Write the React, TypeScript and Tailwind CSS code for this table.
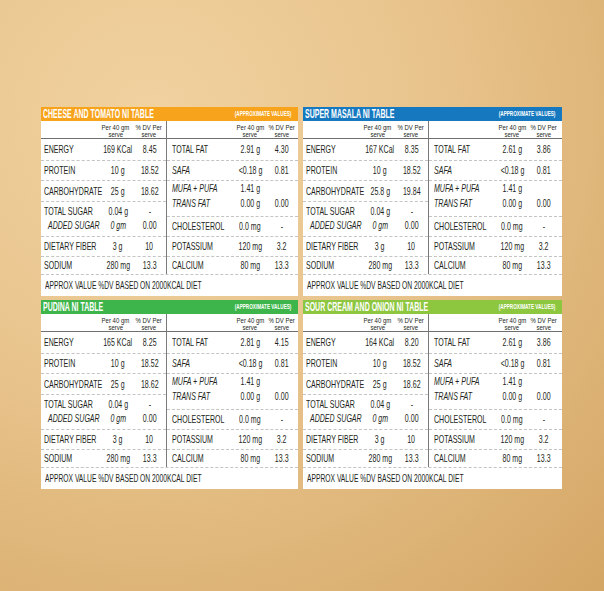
const panels = [
  { title: "CHEESE AND TOMATO NI TABLE", bg: "bg-[#f8a31c]", energy: ["169 KCal", "8.45"], carbo: ["25 g", "18.62"], fat: ["2.91 g", "4.30"] },
  { title: "SUPER MASALA NI TABLE", bg: "bg-[#1679bf]", energy: ["167 KCal", "8.35"], carbo: ["25.8 g", "19.84"], fat: ["2.61 g", "3.86"] },
  { title: "PUDINA NI TABLE", bg: "bg-[#3db54a]", energy: ["165 KCal", "8.25"], carbo: ["25 g", "18.62"], fat: ["2.81 g", "4.15"] },
  { title: "SOUR CREAM AND ONION NI TABLE", bg: "bg-[#8dc63f]", energy: ["164 KCal", "8.20"], carbo: ["25 g", "18.62"], fat: ["2.61 g", "3.86"] },
]

// the print uses a condensed face; squeeze Liberation Sans to match
const Sq = ({ children, o = "origin-left", i }: { children: React.ReactNode; o?: string; i?: boolean }) => (
  <span className={`inline-block scale-x-[0.64] ${o} ${i ? "italic" : ""}`}>{children}</span>
)

const Lbl = ({ left, children, i, indent }: { left: boolean; children: React.ReactNode; i?: boolean; indent?: boolean }) => (
  <div className={left ? (indent ? "w-[62px] pl-[7px]" : "w-[62px] pl-[3px]") : "w-[66px] pl-[5px]"}>
    <Sq i={i}>{children}</Sq>
  </div>
)

const Num = ({ w, children, i }: { w: string; children: React.ReactNode; i?: boolean }) => (
  <div className={`flex justify-center ${w}`}>
    <Sq o="origin-center" i={i}>{children}</Sq>
  </div>
)

const Cells = ({ left, label, value, dv, italic }: { left: boolean; label: string; value: string; dv: string; italic?: boolean }) => (
  <>
    <Lbl left={left} i={italic}>{label}</Lbl>
    <Num w={left ? "w-[30px]" : "w-[34px]"}>{value}</Num>
    <Num w={left ? "flex-1" : "w-[30px]"}>{dv}</Num>
  </>
)

const Head = ({ w, a, b }: { w: string; a: string; b: string }) => (
  <div className={`flex flex-col items-center ${w}`}>
    <span className="inline-block scale-x-[0.75]">{a}</span>
    <span className="inline-block scale-x-[0.75]">{b}</span>
  </div>
)

const SubHead = ({ left }: { left: boolean }) => (
  <div className="flex h-[18px] items-end border-b border-[#6f6f6f] text-[8px] leading-[7px]">
    <div className={left ? "w-[62px]" : "w-[66px]"}></div>
    <Head w={left ? "w-[30px]" : "w-[34px]"} a="Per 40 gm" b="serve" />
    <Head w={left ? "flex-1" : "w-[30px]"} a="% DV Per" b="serve" />
  </div>
)

const Row = ({ h, left, label, value, dv, last, italic }: { h: string; left: boolean; label: string; value: string; dv: string; last?: boolean; italic?: boolean }) => (
  <div className={`flex items-center ${h} ${last ? "" : "border-b border-dashed border-[#c4c4c4]"}`}>
    <Cells left={left} label={label} value={value} dv={dv} italic={italic} />
  </div>
)

const Panel = ({ p }: { p: (typeof panels)[number] }) => (
  <div className="flex flex-col bg-white">
    <div className={`flex h-[14px] items-center pl-[2px] pr-[7px] text-white ${p.bg}`}>
      <div className="min-w-0 flex-1">
        <span className="inline-block origin-left scale-x-[0.56] text-[12.5px] font-bold leading-none">{p.title}</span>
      </div>
      <div className="flex w-[60px] justify-end">
        <span className="inline-block shrink-0 origin-right scale-x-[0.62] text-[7.5px] font-bold leading-none">(APPROXIMATE VALUES)</span>
      </div>
    </div>
    <div className="flex h-[153px]">
      <div className="flex w-[126px] flex-col border-r border-[#7a7a7a]">
        <SubHead left />
        <Row h="h-[22px]" left label="ENERGY" value={p.energy[0]} dv={p.energy[1]} />
        <Row h="h-[20px]" left label="PROTEIN" value="10 g" dv="18.52" />
        <Row h="h-[21px]" left label="CARBOHYDRATE" value={p.carbo[0]} dv={p.carbo[1]} />
        <div className="flex h-[35px] flex-col border-b border-dashed border-[#c4c4c4] pt-[2px]">
          <div className="flex h-[14px] items-center">
            <Cells left label="TOTAL SUGAR" value="0.04 g" dv="-" />
          </div>
          <div className="flex h-[14px] items-center">
            <Lbl left indent i>ADDED SUGAR</Lbl>
            <Num w="w-[30px]" i>0 gm</Num>
            <Num w="flex-1">0.00</Num>
          </div>
        </div>
        <Row h="h-[20px]" left label="DIETARY FIBER" value="3 g" dv="10" />
        <Row h="h-[17px]" left label="SODIUM" value="280 mg" dv="13.3" last />
      </div>
      <div className="flex flex-1 flex-col">
        <SubHead left={false} />
        <Row h="h-[22px]" left={false} label="TOTAL FAT" value={p.fat[0]} dv={p.fat[1]} />
        <Row h="h-[20px]" left={false} label="SAFA" value="<0.18 g" dv="0.81" italic />
        <div className="flex h-[36px] flex-col border-b border-dashed border-[#c4c4c4]">
          <div className="flex h-[14px] items-center">
            <Cells left={false} label="MUFA + PUFA" value="1.41 g" dv="" italic />
          </div>
          <div className="flex h-[16px] items-center">
            <Cells left={false} label="TRANS FAT" value="0.00 g" dv="0.00" italic />
          </div>
        </div>
        <Row h="h-[20px]" left={false} label="CHOLESTEROL" value="0.0 mg" dv="-" />
        <Row h="h-[20px]" left={false} label="POTASSIUM" value="120 mg" dv="3.2" />
        <Row h="h-[17px]" left={false} label="CALCIUM" value="80 mg" dv="13.3" last />
      </div>
    </div>
    <div className="flex h-[22px] items-center border-t border-dashed border-[#c4c4c4] pl-[4px] text-[10.5px]">
      <Sq>APPROX VALUE %DV BASED ON 2000KCAL DIET</Sq>
    </div>
  </div>
)

export default function App() {
  return (
    <div className="h-[591px] w-[604px] overflow-hidden whitespace-nowrap bg-[radial-gradient(circle_at_25%_20%,#f0d2a0_0%,#e9c58e_40%,#d4a665_100%)] pl-[41px] pt-[107px] font-['Liberation_Sans',Arial,sans-serif] text-[11px] leading-none text-[#231f20]">
      <div className="grid grid-cols-[257px_259px] gap-x-[5px] gap-y-[4px]">
        {panels.map((p) => (
          <Panel key={p.title} p={p} />
        ))}
      </div>
    </div>
  )
}
